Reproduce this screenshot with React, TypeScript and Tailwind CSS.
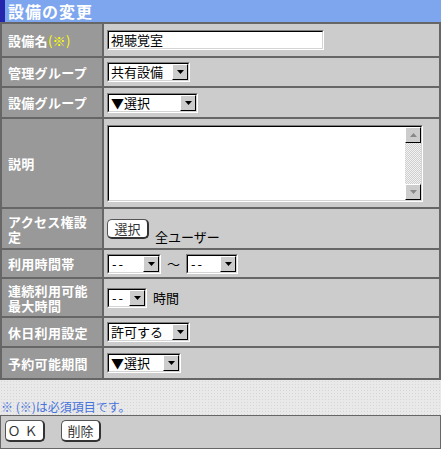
import type { ReactNode } from "react";

const FONT = "font-['Noto_Sans_CJK_JP','Liberation_Sans',sans-serif]";

function Inset({ className, children }: { className: string; children: ReactNode }) {
  return (
    <div className={`border border-t-[#808080] border-l-[#808080] border-b-white border-r-white ${className}`}>
      <div className="flex h-full border border-t-black border-l-black border-b-[#d4d4d4] border-r-[#d4d4d4] bg-white">
        {children}
      </div>
    </div>
  );
}

function Arrow({ up = false, color = "#000" }: { up?: boolean; color?: string }) {
  return (
    <svg width="7" height="4" viewBox="0 0 7 4">
      <path d={up ? "M3.5 0 L7 4 L0 4 Z" : "M0 0 L7 0 L3.5 4 Z"} fill={color} />
    </svg>
  );
}

function DropButton() {
  return (
    <div className="flex w-[16px] shrink-0 items-center justify-center border border-t-white border-l-white border-b-black border-r-black bg-[#cccccc]">
      <Arrow />
    </div>
  );
}

function Select({ className, value }: { className: string; value: string }) {
  return (
    <Inset className={`h-[20px] ${className}`}>
      <span className="flex-1 whitespace-nowrap pl-[2px] text-[13px] leading-[16px] text-black">{value}</span>
      <DropButton />
    </Inset>
  );
}

function Dashes({ className }: { className: string }) {
  return (
    <Inset className={`h-[20px] ${className}`}>
      <span className="flex-1 whitespace-nowrap pl-[3px] text-[13px] leading-[16px] tracking-[2px] text-black">--</span>
      <DropButton />
    </Inset>
  );
}

function WinButton({ children, className }: { children: ReactNode; className: string }) {
  return (
    <div
      className={`flex h-[20px] items-center justify-center rounded-[5px] border border-[#555] border-b-2 border-r-2 border-b-[#333] border-r-[#333] bg-white text-[13px] leading-none text-[#333] ${className}`}
    >
      {children}
    </div>
  );
}

function Row({ label, h, children }: { label: ReactNode; h: string; children: ReactNode }) {
  return (
    <>
      <div className={`flex items-center bg-[#999999] pl-[6px] text-[13px] leading-[15px] font-bold tracking-[0.3px] text-white ${h}`}>
        <div>{label}</div>
      </div>
      <div className={`flex items-center bg-[#cccccc] pl-[3px] ${h}`}>{children}</div>
    </>
  );
}

export default function App() {
  return (
    <div className={`h-[449px] w-[441px] overflow-hidden bg-[#e9e9e9] ${FONT}`}>
      {/* title */}
      <div className="flex h-[22px] bg-[#7ea6ee]">
        <div className="w-[5px] bg-[#2424ac]" />
        <div className="pl-[3px] text-[16px] leading-[22px] font-bold tracking-[1px] text-white">設備の変更</div>
      </div>

      {/* form table */}
      <div className="grid grid-cols-[100px_1fr] gap-[2px] bg-[#666666] p-[2px]">
        <Row
          h="h-[32px]"
          label={
            <>
              設備名<span className="font-normal text-[#ffff00]">(※)</span>
            </>
          }
        >
          <Inset className="h-[20px] w-[217px]">
            <span className="pl-[2px] text-[13px] leading-[16px] text-black">視聴覚室</span>
          </Inset>
        </Row>

        <Row h="h-[28px]" label="管理グループ">
          <Select className="w-[83px]" value="共有設備" />
        </Row>

        <Row h="h-[29px]" label="設備グループ">
          <Select className="w-[91px]" value="▼選択" />
        </Row>

        <Row h="h-[88px]" label="説明">
          <Inset className="mt-[1px] h-[77px] w-[316px]">
            <div className="flex-1" />
            <div className="flex w-[16px] flex-col">
              <div className="flex h-[16px] items-center justify-center border border-t-white border-l-white border-b-black border-r-black bg-[#cccccc]">
                <Arrow up color="#888" />
              </div>
              <div className="flex-1 bg-[#e4e4e4] bg-[repeating-conic-gradient(#cfcfcf_0_25%,#f2f2f2_0_50%)] bg-[length:2px_2px]" />
              <div className="flex h-[16px] items-center justify-center border border-t-white border-l-white border-b-black border-r-black bg-[#cccccc]">
                <Arrow color="#888" />
              </div>
            </div>
          </Inset>
        </Row>

        <Row
          h="h-[39px]"
          label={
            <>
              アクセス権設
              <br />定
            </>
          }
        >
          <div className="flex items-end gap-[6px]">
            <WinButton className="w-[42px]">選択</WinButton>
            <span className="mb-[-6px] text-[13px] leading-[16px] text-black">全ユーザー</span>
          </div>
        </Row>

        <Row h="h-[27px]" label="利用時間帯">
          <div className="flex items-center">
            <Dashes className="w-[54px]" />
            <span className="mx-[6px] text-[13px] leading-[16px] text-black">〜</span>
            <Dashes className="w-[52px]" />
          </div>
        </Row>

        <Row
          h="h-[37px]"
          label={
            <>
              連続利用可能
              <br />
              最大時間
            </>
          }
        >
          <div className="flex items-center gap-[6px]">
            <Dashes className="w-[40px]" />
            <span className="text-[13px] leading-[16px] text-black">時間</span>
          </div>
        </Row>

        <Row h="h-[28px]" label="休日利用設定">
          <Select className="w-[83px]" value="許可する" />
        </Row>

        <Row h="h-[30px]" label="予約可能期間">
          <Select className="w-[74px]" value="▼選択" />
        </Row>
      </div>

      {/* note */}
      <div className="flex h-[35px] items-end bg-[radial-gradient(#d6d6d6_0.6px,transparent_0.8px)] bg-[length:3px_3px] pb-[1px] pl-[1px]">
        <span className="text-[12px] leading-[14px] text-[#4672dc]">※ (※)は必須項目です。</span>
      </div>

      {/* buttons */}
      <div className="flex h-[34px] items-start gap-[16px] border border-[#666666] bg-[#cccccc] pt-[4px] pl-[4px]">
        <WinButton className="h-[22px] w-[40px] tracking-[4px]">ＯＫ</WinButton>
        <WinButton className="h-[22px] w-[40px]">削除</WinButton>
      </div>
    </div>
  );
}
